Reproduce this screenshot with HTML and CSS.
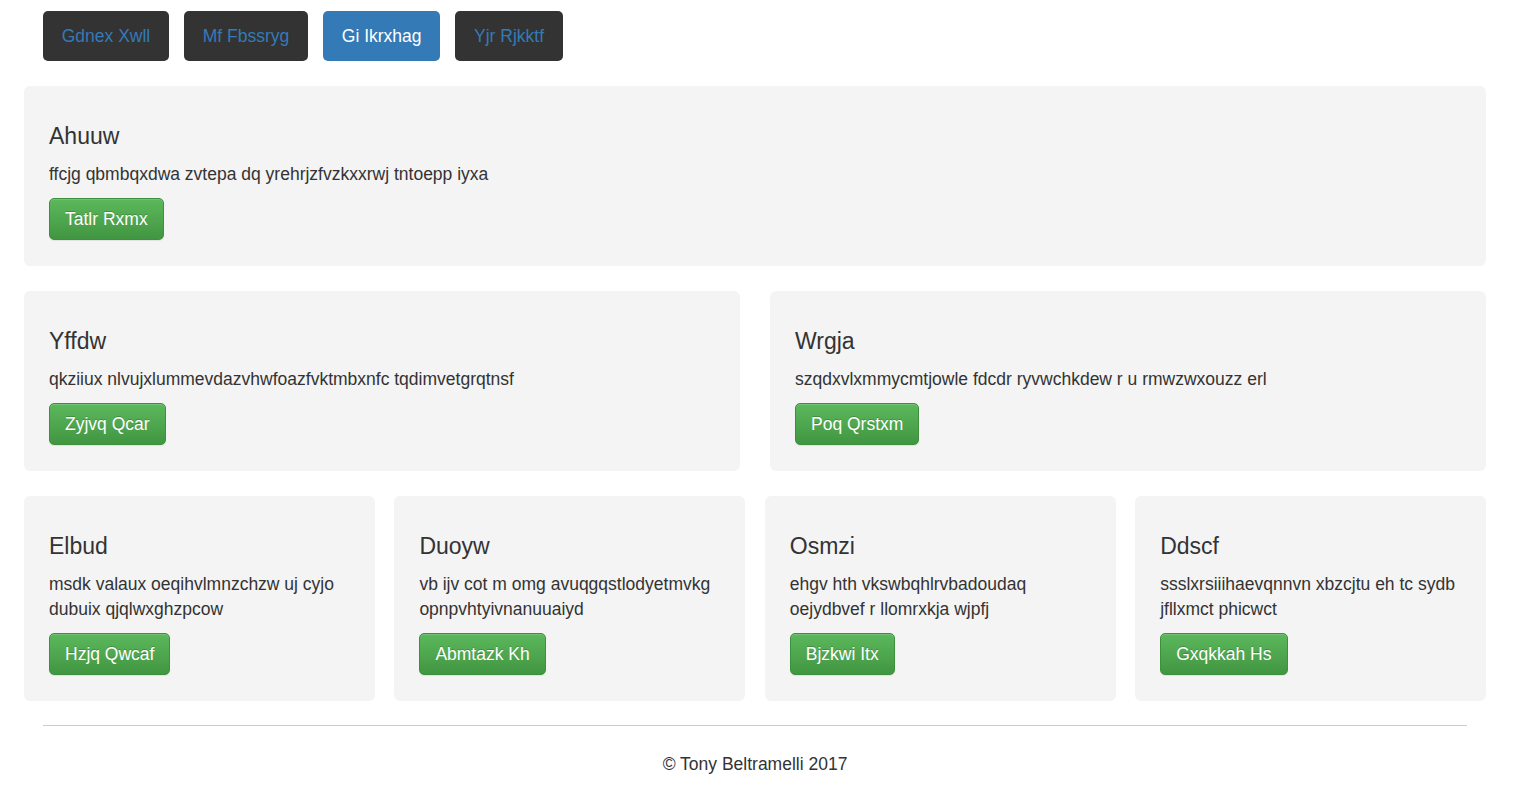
FILE: index.html
```html
<!DOCTYPE html>
<html>
<head>
<meta charset="utf-8">
<link rel="stylesheet" href="styles.css">
</head>
<body>
<div class="page">
  <nav class="nav">
    <a class="pill">Gdnex Xwll</a>
    <a class="pill">Mf Fbssryg</a>
    <a class="pill active">Gi Ikrxhag</a>
    <a class="pill">Yjr Rjkktf</a>
  </nav>

  <div class="row row-1">
    <div class="well">
      <h4>Ahuuw</h4>
      <p>ffcjg qbmbqxdwa zvtepa dq yrehrjzfvzkxxrwj tntoepp iyxa</p>
      <a class="btn">Tatlr Rxmx</a>
    </div>
  </div>

  <div class="row row-2">
    <div class="well">
      <h4>Yffdw</h4>
      <p>qkziiux nlvujxlummevdazvhwfoazfvktmbxnfc tqdimvetgrqtnsf</p>
      <a class="btn">Zyjvq Qcar</a>
    </div>
    <div class="well">
      <h4>Wrgja</h4>
      <p>szqdxvlxmmycmtjowle fdcdr ryvwchkdew r u rmwzwxouzz erl</p>
      <a class="btn">Poq Qrstxm</a>
    </div>
  </div>

  <div class="row row-4">
    <div class="well">
      <h4>Elbud</h4>
      <p>msdk valaux oeqihvlmnzchzw uj cyjo dubuix qjqlwxghzpcow</p>
      <a class="btn">Hzjq Qwcaf</a>
    </div>
    <div class="well">
      <h4>Duoyw</h4>
      <p>vb ijv cot m omg avuqgqstlodyetmvkg opnpvhtyivnanuuaiyd</p>
      <a class="btn">Abmtazk Kh</a>
    </div>
    <div class="well">
      <h4>Osmzi</h4>
      <p>ehgv hth vkswbqhlrvbadoudaq oejydbvef r llomrxkja wjpfj</p>
      <a class="btn">Bjzkwi Itx</a>
    </div>
    <div class="well">
      <h4>Ddscf</h4>
      <p>ssslxrsiiihaevqnnvn xbzcjtu eh tc sydb jfllxmct phicwct</p>
      <a class="btn">Gxqkkah Hs</a>
    </div>
  </div>

  <footer class="footer">
    <hr>
    <p>&copy; Tony Beltramelli 2017</p>
  </footer>
</div>
</body>
</html>
```

FILE: styles.css
```css
html, body {
  margin: 0;
  padding: 0;
  background: #fff;
}
body {
  font-family: "Liberation Sans", Arial, sans-serif;
  font-size: 17.5px;
  line-height: 25px;
  color: #333;
}
.page {
  width: 1462px;
  margin-left: 24px;
}
.nav {
  display: flex;
  gap: 15px;
  padding: 11px 0 0 19px;
}
.pill {
  display: block;
  background: #333;
  color: #337ab7;
  padding: 12.5px 18.75px;
  line-height: 25px;
  border-radius: 5px;
}
.pill.active {
  background: #337ab7;
  color: #fff;
}
.row {
  display: grid;
  margin-top: 25px;
}
.row-1 { grid-template-columns: 1fr; }
.row-2 { grid-template-columns: 1fr 1fr; column-gap: 30px; }
.row-4 { grid-template-columns: repeat(4, 1fr); column-gap: 19.6px; }
.well {
  background: #f4f4f4;
  border-radius: 6px;
  padding: 24px 25px 26px;
}
.well h4 {
  margin: 14px 0 13px;
  font-size: 23px;
  font-weight: normal;
  line-height: 25px;
}
.well p {
  margin: 0 0 11px;
}
.btn {
  display: inline-block;
  padding: 8px 15px;
  line-height: 24px;
  color: #fff;
  text-shadow: 0 -1px 0 rgba(0,0,0,.2);
  background-image: linear-gradient(to bottom, #5cb85c 0, #419641 100%);
  border: 1px solid #3e8f3e;
  border-radius: 5px;
  box-shadow: inset 0 1px 0 rgba(255,255,255,.15), 0 1px 1px rgba(0,0,0,.075);
}
.footer {
  padding: 0 19px;
  text-align: center;
}
.footer hr {
  margin: 24px 0 0;
  border: 0;
  border-top: 1px solid #ccc;
}
.footer p {
  margin: 26px 0 0;
}
```
